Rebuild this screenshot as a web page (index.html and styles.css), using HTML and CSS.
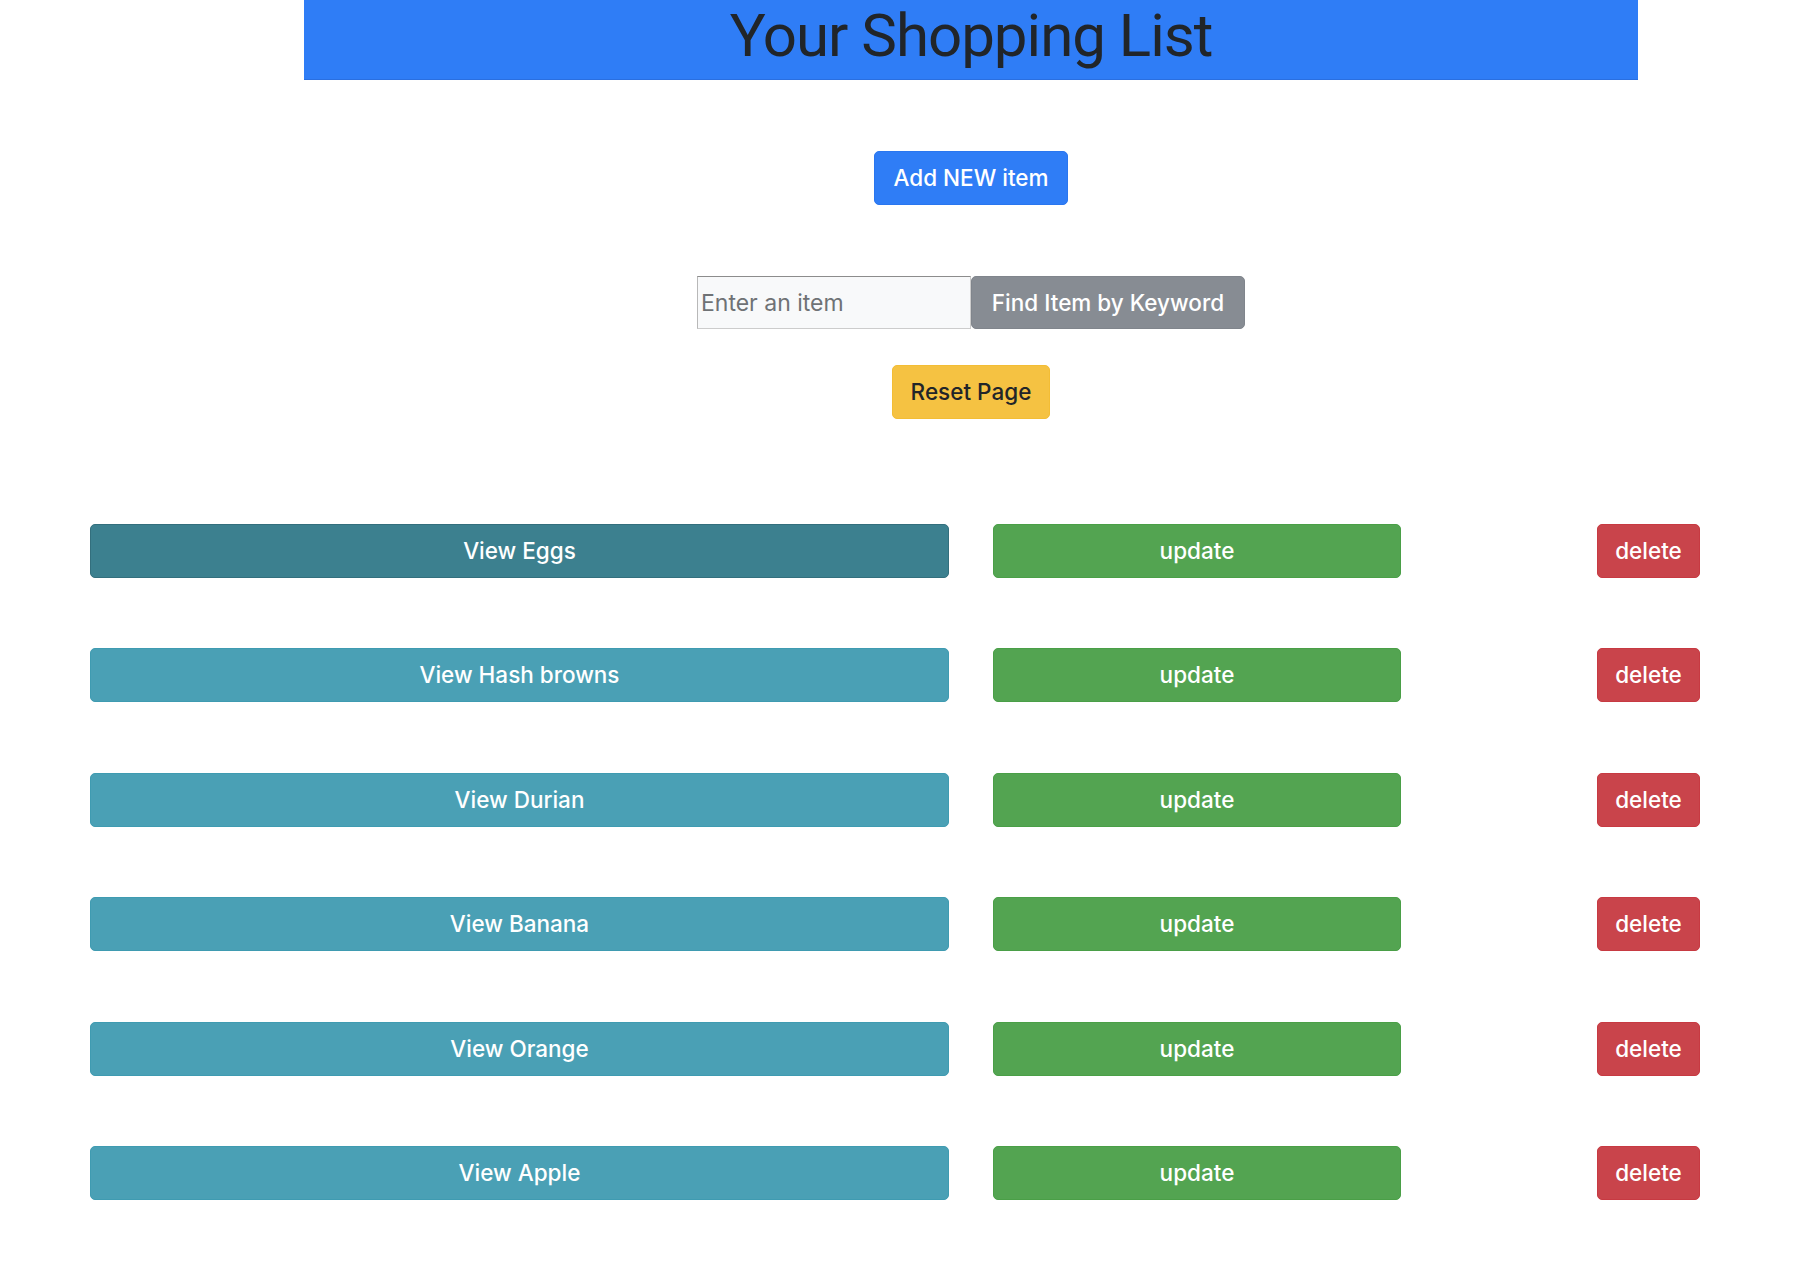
FILE: index.html
```html
<!DOCTYPE html>
<html lang="en">
<head>
<meta charset="utf-8">
<title>Your Shopping List</title>
<link rel="stylesheet" href="styles.css">
</head>
<body>
<div class="top">
  <header class="banner"><h1 class="title">Your Shopping List</h1></header>
  <div class="add-row"><button class="btn btn-primary">Add NEW item</button></div>
  <div class="search-row">
    <input class="search-input" type="text" placeholder="Enter an item">
    <button class="btn btn-secondary btn-find">Find Item by Keyword</button>
  </div>
  <div class="reset-row"><button class="btn btn-warning">Reset Page</button></div>
</div>
<ul class="list">
  <li class="item"><button class="btn btn-info btn-view is-active">View Eggs</button><button class="btn btn-success btn-update">update</button><button class="btn btn-danger btn-delete">delete</button></li>
  <li class="item"><button class="btn btn-info btn-view">View Hash browns</button><button class="btn btn-success btn-update">update</button><button class="btn btn-danger btn-delete">delete</button></li>
  <li class="item"><button class="btn btn-info btn-view">View Durian</button><button class="btn btn-success btn-update">update</button><button class="btn btn-danger btn-delete">delete</button></li>
  <li class="item"><button class="btn btn-info btn-view">View Banana</button><button class="btn btn-success btn-update">update</button><button class="btn btn-danger btn-delete">delete</button></li>
  <li class="item"><button class="btn btn-info btn-view">View Orange</button><button class="btn btn-success btn-update">update</button><button class="btn btn-danger btn-delete">delete</button></li>
  <li class="item"><button class="btn btn-info btn-view">View Apple</button><button class="btn btn-success btn-update">update</button><button class="btn btn-danger btn-delete">delete</button></li>
</ul>
</body>
</html>
```
FILE: styles.css
```css
html, body {
  margin: 0;
  padding: 0;
  background: #ffffff;
}
body {
  font-family: Inter, "Noto Sans", "Liberation Sans", sans-serif;
  color: #212529;
}
.top {
  margin-left: 304px;
  width: 1334px;
  display: flex;
  flex-direction: column;
  align-items: center;
}
.banner {
  width: 100%;
  height: 80px;
  background: #2f7df6;
  border-bottom: 1px solid #2a6fe0;
  box-sizing: border-box;
  display: flex;
  justify-content: center;
}
.title {
  margin: 0;
  font-family: Roboto, "Liberation Sans", sans-serif;
  font-weight: 400;
  font-size: 60px;
  letter-spacing: -1px;
  line-height: 80px;
  color: #212529;
  transform: translateY(-4px);
}
.btn {
  font-family: Inter, "Noto Sans", "Liberation Sans", sans-serif;
  font-size: 22.5px;
  font-weight: 500;
  line-height: 34px;
  padding: 9px 18px;
  border: 1px solid transparent;
  border-radius: 5px;
  color: #ffffff;
  cursor: pointer;
  box-sizing: border-box;
  height: 54px;
  text-align: center;
}
.btn-primary { background: #2f7df6; border-color: #2a76ef; }
.btn-secondary { background: #878c93; border-color: #80858c; }
.btn-warning { background: #f5c242; border-color: #f3bd35; color: #212529; }
.btn-info { background: #4aa0b5; border-color: #3f9bb1; }
.btn-info.is-active { background: #3c808f; border-color: #336f7d; }
.btn-success { background: #53a451; border-color: #4a9f47; }
.btn-danger { background: #c9444b; border-color: #c73a42; }

.add-row {
  margin-top: 71px;
}
.search-row {
  margin-top: 71px;
  display: flex;
  align-items: stretch;
}
.search-input {
  width: 274px;
  height: 53px;
  box-sizing: border-box;
  background: #f8f9fa;
  border: 1px solid #cccccc;
  border-top-color: #8c8c8c;
  border-left-color: #b8b8b8;
  font-family: Inter, "Noto Sans", "Liberation Sans", sans-serif;
  font-size: 23px;
  padding: 0 3px;
  margin: 0;
  color: #495057;
}
.search-input::placeholder { color: #6f7275; }
.btn-find {
  width: 274px;
  height: 53px;
  padding: 0;
}
.reset-row {
  margin-top: 36px;
}
.list {
  list-style: none;
  margin: 105px 0 0 0;
  padding: 0 0 0 90px;
  display: flex;
  flex-direction: column;
  gap: 70.4px;
}
.item {
  display: flex;
  align-items: center;
}
.btn-view { width: 859px; }
.btn-update { width: 408px; margin-left: 44px; }
.btn-delete { width: 103px; margin-left: 196px; padding: 9px 0; }
```
